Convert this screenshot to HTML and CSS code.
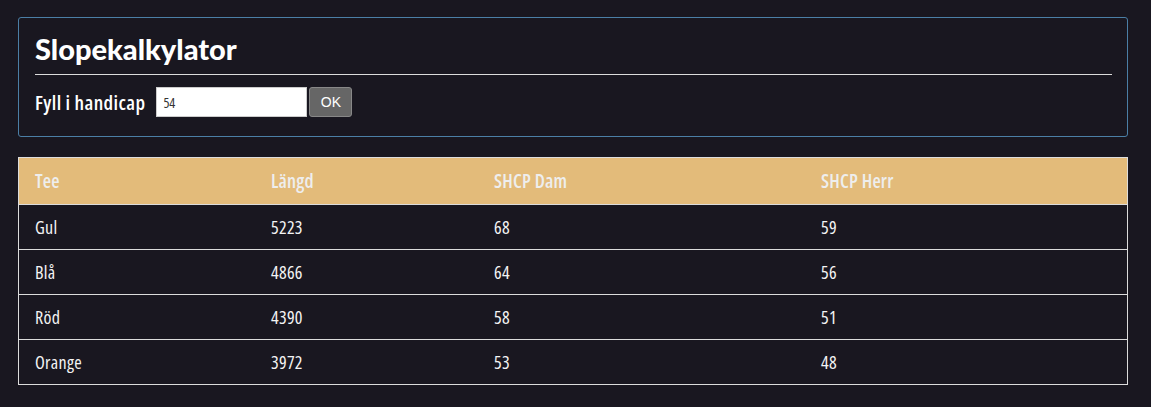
FILE: index.html
```html
<!DOCTYPE html>
<html lang="sv">
<head>
<meta charset="utf-8">
<title>Slopekalkylator</title>
<link rel="stylesheet" href="styles.css">
</head>
<body>
<main class="page">
  <section class="panel">
    <h1 class="panel-title">Slopekalkylator</h1>
    <form class="hcp-form">
      <label class="hcp-label" for="hcp">Fyll i handicap</label>
      <input class="hcp-input" id="hcp" type="text" value="54">
      <button class="hcp-btn" type="button">OK</button>
    </form>
  </section>
  <table class="slope-table">
    <thead>
      <tr><th class="c1">Tee</th><th class="c2">Längd</th><th class="c3">SHCP Dam</th><th class="c4">SHCP Herr</th></tr>
    </thead>
    <tbody>
      <tr><td>Gul</td><td>5223</td><td>68</td><td>59</td></tr>
      <tr><td>Blå</td><td>4866</td><td>64</td><td>56</td></tr>
      <tr><td>Röd</td><td>4390</td><td>58</td><td>51</td></tr>
      <tr><td>Orange</td><td>3972</td><td>53</td><td>48</td></tr>
    </tbody>
  </table>
</main>
</body>
</html>
```
FILE: styles.css
```css
html, body {
  margin: 0;
  padding: 0;
  background: #191720;
  color: #f2f2f2;
  font-family: "Open Sans", "DejaVu Sans Condensed", sans-serif;
  font-stretch: 75%;
}
.page {
  padding: 17px 23px 20px 18px;
  display: flex;
  flex-direction: column;
  gap: 20px;
}
.panel {
  border: 1px solid #4b7fa6;
  border-radius: 3px;
  padding: 14px 15px 19px 16px;
}
.panel-title {
  margin: 0;
  font-family: Lato, "Liberation Sans", sans-serif;
  font-stretch: normal;
  font-weight: 900;
  font-size: 29px;
  line-height: 34px;
  color: #fff;
  padding-bottom: 8px;
  border-bottom: 1px solid #dcdcdc;
}
.hcp-form {
  display: flex;
  align-items: center;
  margin-top: 12px;
}
.hcp-label {
  font-weight: 600;
  font-size: 20px;
  letter-spacing: 0.4px;
  color: #fff;
  margin-right: 11px;
}
.hcp-input {
  box-sizing: border-box;
  width: 151px;
  height: 30px;
  border: 1px solid #ccc;
  background: #fff;
  color: #333;
  font-family: "Open Sans", sans-serif;
  font-stretch: 75%;
  font-size: 14px;
  padding: 0 6px;
  margin: 0;
}
.hcp-btn {
  box-sizing: border-box;
  height: 30px;
  width: 43px;
  margin: 0 0 0 2px;
  background: #666;
  border: 1px solid #888;
  border-radius: 3px;
  color: #fff;
  font-family: "Liberation Sans", sans-serif;
  font-size: 14px;
  padding: 0;
}
.slope-table {
  width: 100%;
  border-collapse: collapse;
  border: 1px solid #dcdcdc;
  font-size: 18px;
}
.slope-table th, .slope-table td {
  text-align: left;
  padding: 0 16px;
  height: 44px;
}
.slope-table thead tr {
  background: #e3bb7a;
}
.slope-table th {
  color: #eeeeee;
  font-weight: 600;
  font-size: 19px;
  letter-spacing: 0.2px;
  height: 46px;
}
.slope-table tbody tr {
  border-top: 1px solid #dcdcdc;
}
.slope-table td {
  color: #f4f4f4;
  font-weight: 400;
  letter-spacing: 0.3px;
}
.c1 { width: 204px; }
.c2 { width: 191px; }
.c3 { width: 295px; }
```
